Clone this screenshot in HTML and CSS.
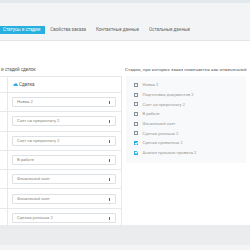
FILE: index.html
```html
<!doctype html>
<html lang="ru">
<head>
	<meta charset="UTF-8">
	<title>Статусы и стадии</title>
	<link rel="stylesheet" href="styles.css">
</head>
<body>
	<div class="topline"></div>
	<div class="head">
		<ul class="tabs">
			<li class="active">Статусы и стадии</li>
			<li>Свойства заказа</li>
			<li>Контактные данные</li>
			<li>Остальные данные</li>
		</ul>
	</div>
	<div class="content">
		<div class="left">
			<div class="title">и стадий сделок</div>
			<table class="map">
				<tr>
					<th class="c1"></th>
					<th><span class="cloud"><svg width="5" height="3" viewBox="0 0 10 6"><path d="M2 6h6.5a1.5 1.5 0 0 0 0-3A3 3 0 0 0 3 2.2 2 2 0 0 0 2 6z" fill="#2fb0e4"/></svg></span>Сделка</th>
				</tr>
				<tr><td class="c1"></td><td><div class="sel">Новая 2<i></i></div></td></tr>
				<tr><td class="c1"></td><td><div class="sel">Счет на предоплату 2<i></i></div></td></tr>
				<tr><td class="c1"></td><td><div class="sel">Счет на предоплату 2<i></i></div></td></tr>
				<tr><td class="c1"></td><td><div class="sel">В работе<i></i></div></td></tr>
				<tr><td class="c1"></td><td><div class="sel">Финальный счет<i></i></div></td></tr>
				<tr><td class="c1"></td><td><div class="sel">Финальный счет<i></i></div></td></tr>
				<tr><td class="c1"></td><td><div class="sel">Сделка успешна 2<i></i></div></td></tr>
			</table>
		</div>
		<div class="right">
			<div class="title">Стадии, при которых заказ помечается как отмененный</div>
			<ul class="checks">
				<li><span class="box"></span>Новая 2</li>
				<li><span class="box"></span>Подготовка документов 2</li>
				<li><span class="box"></span>Счет на предоплату 2</li>
				<li><span class="box"></span>В работе</li>
				<li><span class="box"></span>Финальный счет</li>
				<li><span class="box"></span>Сделка успешна 2</li>
				<li><span class="box on"></span>Сделка провалена 2</li>
				<li><span class="box on"></span>Анализ причины провала 2</li>
			</ul>
		</div>
	</div>
	<div class="foot"></div>
</body>
</html>
```

FILE: styles.css
```css
body,ul,li{
	margin:0;
	padding:0;
	list-style:none;
}
*{
	box-sizing:border-box;
}
body{
	width:250px;
	height:250px;
	overflow:hidden;
	background:#f3f4f5;
	font-family:Roboto,"Open Sans",sans-serif;
	font-size:4.5px;
	color:#666;
}
.topline{
	height:3px;
	background:#e3eaee;
}
.head{
	height:38px;
	padding-top:23px;
	border-bottom:1px solid #e2e5e8;
}
.tabs{
	display:flex;
}
.tabs li{
	height:8px;
	line-height:8px;
	padding:0 5px;
	white-space:nowrap;
	color:#666;
}
.tabs li.active{
	background:#27b0df;
	color:#fff;
	padding:0 5px 0 3px;
}
.content{
	display:flex;
	background:#fff;
	height:184px;
	padding-top:26px;
}
.title{
	height:9px;
	line-height:6px;
	white-space:nowrap;
	color:#555;
}
.left{
	width:182px;
	margin-left:-60px;
	flex:none;
}
.left .title{
	padding-left:61px;
}
.map{
	width:182px;
	border-collapse:collapse;
}
.map th,.map td{
	border:1px solid #e6e9ec;
	text-align:left;
	font-weight:normal;
	padding:0 5px 0 4px;
}
.map th{
	height:16px;
	color:#555;
}
.map td{
	height:19.3px;
}
.map .c1{
	width:67px;
}
.cloud{
	display:inline-block;
	margin:0 1px 0 1px;
	vertical-align:0;
}
.sel{
	position:relative;
	height:10px;
	line-height:8px;
	border:1px solid #dde1e4;
	border-radius:1px;
	padding-left:4px;
	font-size:4.2px;
	color:#888;
}
.sel i{
	position:absolute;
	right:5px;
	top:3px;
	width:1.5px;
	height:3px;
	background:#666;
}
.right{
	flex:1;
	min-width:0;
	padding-left:3px;
}
.right .title{
	font-size:4.4px;
	letter-spacing:0.1px;
}
.checks{
	margin-left:1px;
	width:120px;
	background:#f8f9fa;
	padding:4px 0 5px 8px;
}
.checks li{
	height:9.7px;
	display:flex;
	align-items:center;
	font-size:4.2px;
	color:#999;
	white-space:nowrap;
}
.box{
	width:4px;
	height:4px;
	border:0.6px solid #8a8f94;
	margin-right:4.5px;
	flex:none;
}
.box.on{
	border:none;
	background:#27b0df;
	position:relative;
}
.box.on:after{
	content:"";
	position:absolute;
	left:1px;
	top:0.6px;
	width:2px;
	height:1.2px;
	border-left:0.6px solid #fff;
	border-bottom:0.6px solid #fff;
	transform:rotate(-45deg);
}
.foot{
	height:20px;
	background:#ebecee;
}
```
